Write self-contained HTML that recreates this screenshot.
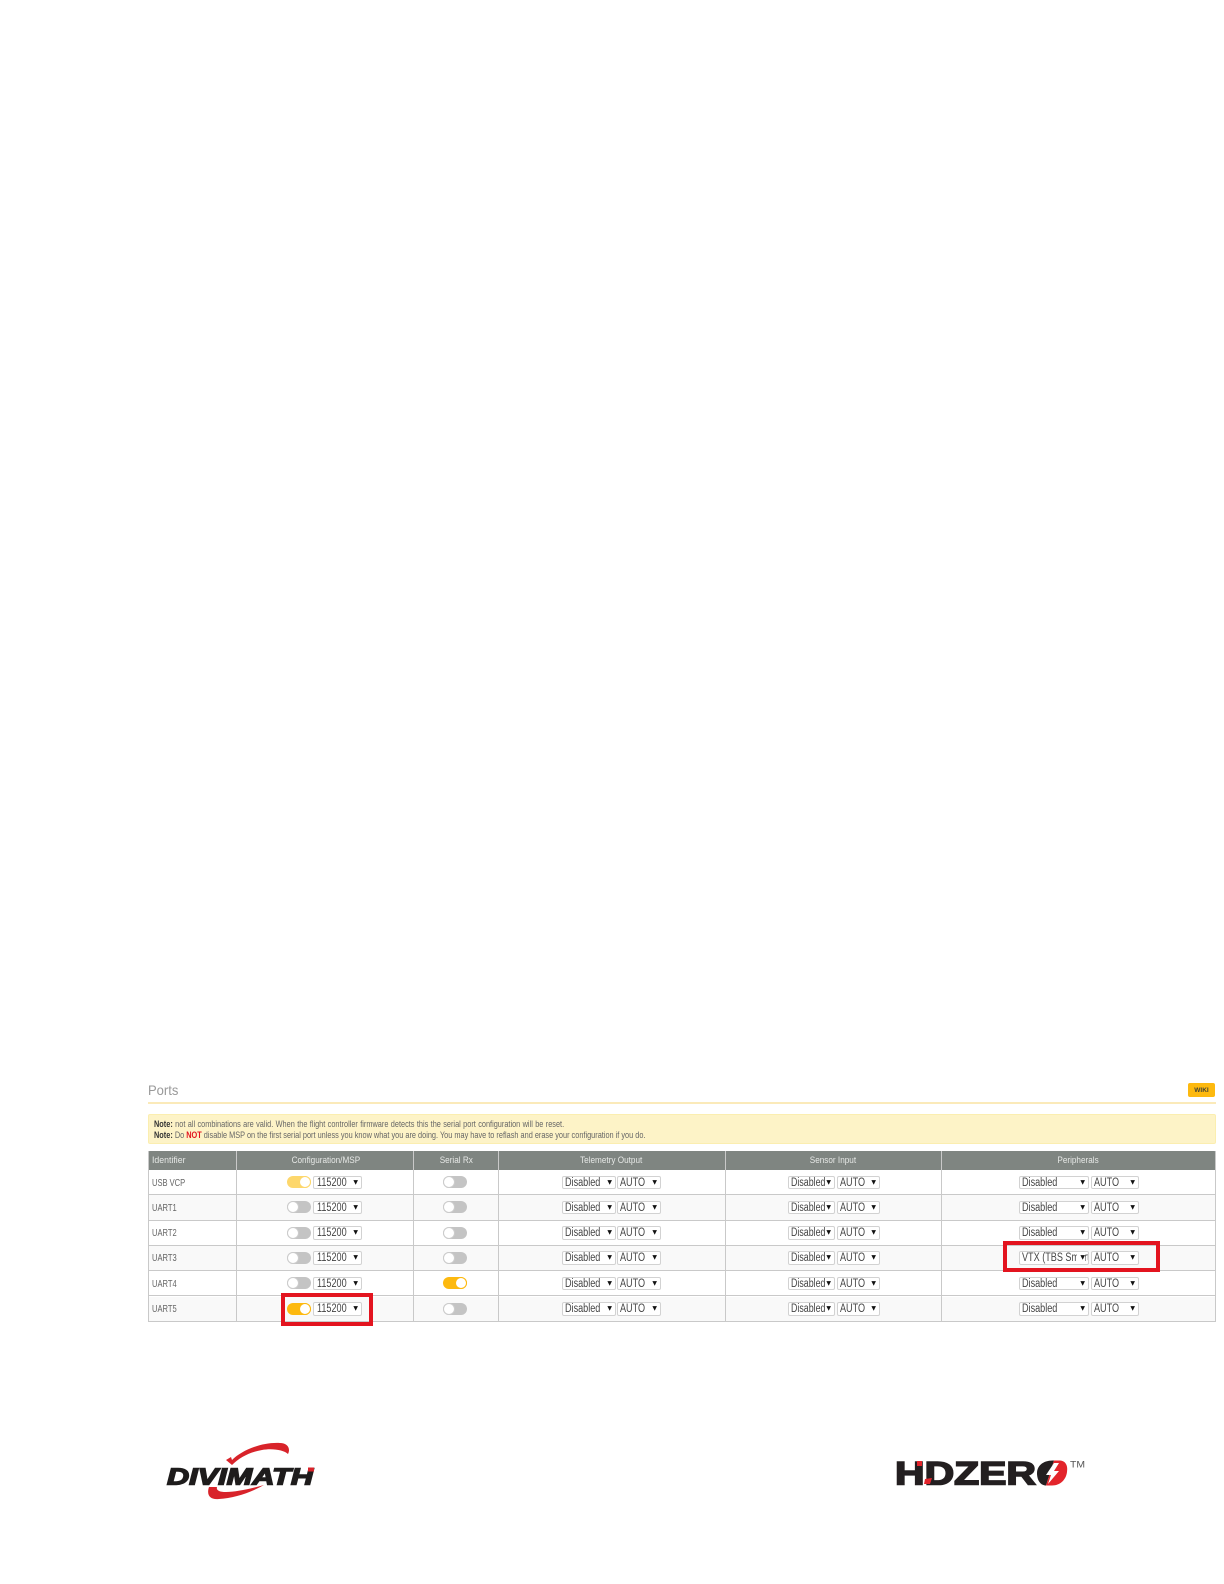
<!DOCTYPE html>
<html><head><meta charset="utf-8"><style>
html,body{margin:0;padding:0;background:#fff}
#p{position:relative;width:1224px;height:1584px;overflow:hidden;font-family:"Liberation Sans",sans-serif;background:#fff}
#p div{position:absolute;box-sizing:border-box}
em{font-style:normal;display:inline-block;transform-origin:0 50%;transform:scaleX(.79);white-space:nowrap}
.row{left:148px;width:1068px;height:25.3px;border-bottom:1px solid #c9c9c9}
.alt{background:#f9f9f9}
.v{top:1151px;height:171px;width:1px;background:#c9c9c9}
.id{left:4px;top:6.5px;font-size:10.5px;line-height:12px;color:#666;white-space:nowrap}
.id em{transform:scaleX(.72)}
.t{top:6px;width:24px;height:12px;border-radius:6px;background:#c4c4c4}
.t i{position:absolute;left:0;top:0;width:12px;height:12px;border-radius:50%;background:#fff;border:1px solid #ccc;box-sizing:border-box}
.t.on{background:#fdb90f}.t.on i{left:12px;border-color:#fdb90f}
.t.dim{background:#fdd76c}.t.dim i{left:12px;border-color:#fdd76c}
.c{left:139px}.r{left:295px}
.s{top:5.5px;height:13.5px;border:1px solid #d2d2d2;border-radius:2px;background:#fff;font-size:11.5px;line-height:12px;color:#444;white-space:nowrap;overflow:hidden;padding-left:2px}
.s b{position:absolute;right:3px;top:0;width:8px;text-align:right;font:6px/11px "DejaVu Sans",sans-serif;color:#111;background:#fff}
.e b{width:5px}
.e em{transform:scaleX(.77)}
.a{left:165px;width:49px;padding-left:3px}
.b{left:414px;width:54px}.d{left:469px;width:44px}
.e{left:640px;width:47px}.f{left:689px;width:43px}
.g{left:871px;width:70px}.h{left:943px;width:48px}
.th{top:1151px;height:19px;font-size:9.5px;line-height:20px;color:#e6e8e6;text-align:center;white-space:nowrap}
.th em{transform-origin:50% 50%;transform:scaleX(.86)}
.red{border:4px solid #e3141f}
</style></head><body><div id="p">
<div style="left:148px;top:1082px;font-size:14px;line-height:17px;color:#999"><em style="transform:scaleX(.93)">Ports</em></div>
<div style="left:148px;top:1102px;width:1068px;height:2px;background:#fbeab9"></div>
<div style="left:1188px;top:1083px;width:27px;height:14px;background:#fdb90f;border-radius:2px;font-size:6.5px;font-weight:bold;line-height:15px;color:#443;text-align:center">WIKI</div>
<div style="left:148px;top:1114px;width:1068px;height:29.5px;background:#fdf3c7;border:1px solid #fbeeb0;border-radius:2px"></div>
<div style="left:154px;top:1118.5px;font-size:8.8px;line-height:11px;color:#666;white-space:nowrap;transform-origin:0 0;transform:scaleX(.835)"><span style="word-spacing:.4px"><strong style="color:#333">Note:</strong> not all combinations are valid. When the flight controller firmware detects this the serial port configuration will be reset.</span><br><strong style="color:#333">Note:</strong> Do <strong style="color:#e3141f">NOT</strong> disable MSP on the first serial port unless you know what you are doing. You may have to reflash and erase your configuration if you do.</div>

<div style="left:148px;top:1151px;width:1068px;height:19px;background:#7f8581;border-radius:2px 2px 0 0"></div>
<div class="th" style="left:152px;text-align:left"><em style="transform-origin:0 50%;transform:scaleX(.92)">Identifier</em></div>
<div class="th" style="left:237px;width:177px"><em>Configuration/MSP</em></div>
<div class="th" style="left:414px;width:84px"><em>Serial Rx</em></div>
<div class="th" style="left:498px;width:227px"><em>Telemetry Output</em></div>
<div class="th" style="left:725px;width:216px"><em>Sensor Input</em></div>
<div class="th" style="left:941px;width:275px"><em>Peripherals</em></div>

<div class="row" style="top:1170px"><div class="id"><em>USB VCP</em></div><div class="t dim c"><i></i></div><div class="s a"><em>115200</em><b>▼</b></div><div class="t r"><i></i></div><div class="s b"><em>Disabled</em><b>▼</b></div><div class="s d"><em>AUTO</em><b>▼</b></div><div class="s e"><em>Disabled</em><b>▼</b></div><div class="s f"><em>AUTO</em><b>▼</b></div><div class="s g"><em>Disabled</em><b>▼</b></div><div class="s h"><em>AUTO</em><b>▼</b></div></div>
<div class="row alt" style="top:1195.3px"><div class="id"><em>UART1</em></div><div class="t c"><i></i></div><div class="s a"><em>115200</em><b>▼</b></div><div class="t r"><i></i></div><div class="s b"><em>Disabled</em><b>▼</b></div><div class="s d"><em>AUTO</em><b>▼</b></div><div class="s e"><em>Disabled</em><b>▼</b></div><div class="s f"><em>AUTO</em><b>▼</b></div><div class="s g"><em>Disabled</em><b>▼</b></div><div class="s h"><em>AUTO</em><b>▼</b></div></div>
<div class="row" style="top:1220.6px"><div class="id"><em>UART2</em></div><div class="t c"><i></i></div><div class="s a"><em>115200</em><b>▼</b></div><div class="t r"><i></i></div><div class="s b"><em>Disabled</em><b>▼</b></div><div class="s d"><em>AUTO</em><b>▼</b></div><div class="s e"><em>Disabled</em><b>▼</b></div><div class="s f"><em>AUTO</em><b>▼</b></div><div class="s g"><em>Disabled</em><b>▼</b></div><div class="s h"><em>AUTO</em><b>▼</b></div></div>
<div class="row alt" style="top:1245.9px"><div class="id"><em>UART3</em></div><div class="t c"><i></i></div><div class="s a"><em>115200</em><b>▼</b></div><div class="t r"><i></i></div><div class="s b"><em>Disabled</em><b>▼</b></div><div class="s d"><em>AUTO</em><b>▼</b></div><div class="s e"><em>Disabled</em><b>▼</b></div><div class="s f"><em>AUTO</em><b>▼</b></div><div class="s g"><em>VTX (TBS SmartAudio)</em><b>▼</b></div><div class="s h"><em>AUTO</em><b>▼</b></div></div>
<div class="row" style="top:1271.2px"><div class="id"><em>UART4</em></div><div class="t c"><i></i></div><div class="s a"><em>115200</em><b>▼</b></div><div class="t on r"><i></i></div><div class="s b"><em>Disabled</em><b>▼</b></div><div class="s d"><em>AUTO</em><b>▼</b></div><div class="s e"><em>Disabled</em><b>▼</b></div><div class="s f"><em>AUTO</em><b>▼</b></div><div class="s g"><em>Disabled</em><b>▼</b></div><div class="s h"><em>AUTO</em><b>▼</b></div></div>
<div class="row alt" style="top:1296.5px"><div class="id"><em>UART5</em></div><div class="t on c"><i></i></div><div class="s a"><em>115200</em><b>▼</b></div><div class="t r"><i></i></div><div class="s b"><em>Disabled</em><b>▼</b></div><div class="s d"><em>AUTO</em><b>▼</b></div><div class="s e"><em>Disabled</em><b>▼</b></div><div class="s f"><em>AUTO</em><b>▼</b></div><div class="s g"><em>Disabled</em><b>▼</b></div><div class="s h"><em>AUTO</em><b>▼</b></div></div>

<div class="v" style="left:148px"></div><div class="v" style="left:236px"></div><div class="v" style="left:413px"></div><div class="v" style="left:498px"></div><div class="v" style="left:725px"></div><div class="v" style="left:941px"></div><div class="v" style="left:1215px"></div>

<div class="red" style="left:281px;top:1293px;width:92px;height:33px"></div>
<div class="red" style="left:1003px;top:1241px;width:157px;height:31px"></div>

<svg style="position:absolute;left:0;top:0" width="1224" height="1584" viewBox="0 0 1224 1584">
<path d="M226 1460 L231 1457 L232 1460 C242 1450 262 1442 280 1443 C287 1443 291 1448 288 1454 C284 1450 272 1448 262 1450 C250 1452 240 1457 232 1465 Z" fill="#d8232a"/>
<path d="M209 1487 C206 1496 211 1500 219 1499 C234 1498 250 1493 264 1485 C250 1489 236 1492 226 1492 C219 1492 216 1490 217 1487 Z" fill="#d8232a"/>
<text x="167" y="1484.5" font-family="Liberation Sans,sans-serif" font-size="23.5" font-weight="bold" font-style="italic" textLength="146" lengthAdjust="spacingAndGlyphs" fill="#1e1c1c" stroke="#1e1c1c" stroke-width="1.4">DIVIMATH</text>
<rect x="308" y="1467.5" width="6" height="4" fill="#d8232a"/>
<text x="895" y="1484.3" font-family="Liberation Sans,sans-serif" font-size="32" font-weight="bold" textLength="141" lengthAdjust="spacingAndGlyphs" fill="#231f20" stroke="#231f20" stroke-width="1.6">HDZER</text>
<rect x="917" y="1461" width="5" height="5" fill="#e3242b"/>
<path d="M925 1479 L932 1478 L930 1484 L924 1484 Z" fill="#e3242b"/>
<path d="M1054 1460.5 C1043 1460 1037 1466 1037 1473 C1037 1481 1041 1485.5 1046 1485.5 Z" fill="#231f20"/>
<path d="M1054 1460.5 L1060 1460.5 C1066 1461 1068 1466 1067 1472 C1066 1480 1060 1485.5 1052 1485.5 L1046 1485.5 Z" fill="#e3242b"/>
<path d="M1054 1463 L1046 1475 L1051 1475 L1048 1484 L1059 1471 L1054 1471 L1059 1463 Z" fill="#fff"/>
<text x="1070" y="1467.5" font-family="Liberation Sans,sans-serif" font-size="9" fill="#555" textLength="15" lengthAdjust="spacingAndGlyphs">TM</text>
</svg>
</div></body></html>
